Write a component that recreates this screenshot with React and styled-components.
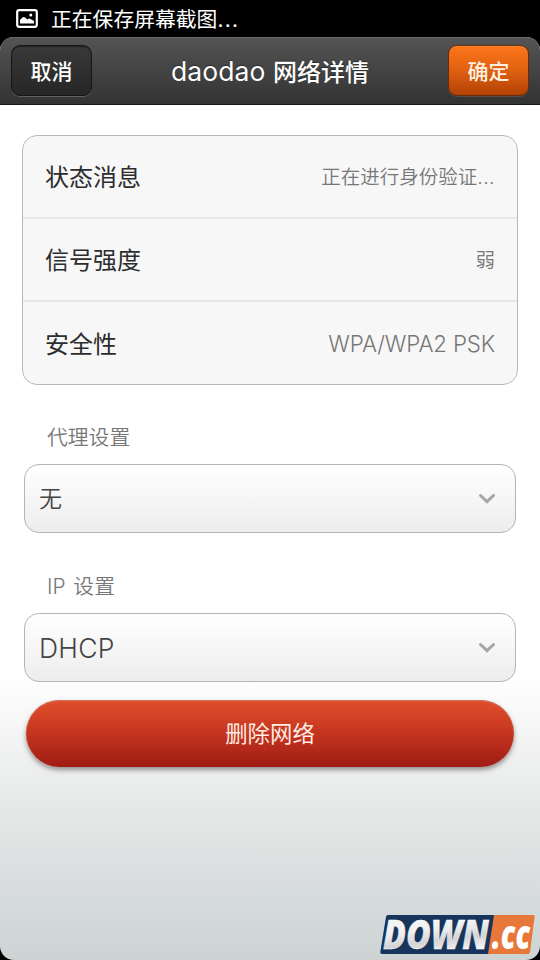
import React from 'react';
import styled, { createGlobalStyle } from 'styled-components';

const GlobalStyle = createGlobalStyle`
	* {
		box-sizing: border-box;
	}
	body {
		margin: 0;
		background: #000;
		font-family: Inter, 'Noto Sans CJK SC', sans-serif;
	}
	button {
		font-family: inherit;
		padding: 0;
	}
`;

const Phone = styled.div`
	width: 540px;
	height: 960px;
	display: flex;
	flex-direction: column;
	position: relative;
	overflow: hidden;
	background: #000;
`;

const StatusBar = styled.div`
	height: 37px;
	flex-shrink: 0;
	display: flex;
	align-items: center;
	padding-left: 16px;
	color: #fff;
	svg {
		margin-right: 13px;
	}
	span {
		font-size: 20.8px;
		line-height: 36px;
		padding-top: 2px;
		white-space: nowrap;
	}
`;

const Dots = styled.i`
	font-style: normal;
	letter-spacing: ${(props) => props.$gap}px;
`;

const Window = styled.div`
	flex: 1;
	display: flex;
	flex-direction: column;
	border-radius: 14px;
	overflow: hidden;
	background: linear-gradient(#fff 0, #fff 635px, #eceeed 740px, #dbdfdf 830px, #cdd3d3 923px);
`;

const Header = styled.header`
	height: 68px;
	flex-shrink: 0;
	display: flex;
	justify-content: space-between;
	align-items: flex-start;
	padding: 8px 11px 0 11px;
	background: linear-gradient(#545454, #333);
	border-bottom: 1px solid #181818;
	box-shadow: inset 0 1px 0 #686868;
	h1 {
		margin: 0;
		color: #fff;
		font-size: 24px;
		line-height: 52px;
		font-weight: 500;
		white-space: pre;
		text-shadow: 0 -1px 1px rgba(0, 0, 0, 0.4);
		span {
			font-weight: 400;
			font-size: 26.5px;
			letter-spacing: 0.1px;
		}
	}
`;

const HeaderButton = styled.button`
	width: 81px;
	height: 51px;
	border-radius: 9px;
	border: 1px solid ${(props) => (props.$primary ? '#6a2c08' : '#171717')};
	background: ${(props) =>
		props.$primary
			? 'linear-gradient(#fb7619, #e36312 45%, #b24205)'
			: 'linear-gradient(#393939, #262626)'};
	box-shadow: ${(props) =>
		props.$primary
			? 'inset 0 1px 0 #ff8a35, 0 1px 0 #5a4a42'
			: 'inset 0 1px 1px #222, 0 1px 0 #606060'};
	color: ${(props) => (props.$primary ? '#fff0df' : '#fff')};
	font-size: 21px;
	line-height: 51px;
	font-weight: 500;
`;

const Content = styled.main`
	display: flex;
	flex-direction: column;
	padding: 30px 24px 0;
`;

const InfoCard = styled.section`
	height: 250px;
	margin: 0 -2px 0 -2px;
	border: 1px solid #b9b9b9;
	border-radius: 15px;
	background: #f7f7f7;
	display: grid;
	grid-template-rows: 83px 83px 82px;
`;

const InfoRow = styled.div`
	display: flex;
	align-items: center;
	justify-content: space-between;
	padding: 3px 22px 0;
	border-bottom: 2px solid #e6e6e6;
	&:last-child {
		border-bottom: 0;
	}
`;

const InfoLabel = styled.span`
	font-size: 24px;
	line-height: 36px;
	color: #2d2d2d;
`;

const InfoValue = styled.span`
	font-size: ${(props) => (props.$latin ? '22.3px' : '19.5px')};
	letter-spacing: ${(props) => (props.$latin ? '-0.15px' : 'normal')};
	font-weight: ${(props) => (props.$latin ? 300 : 350)};
	line-height: 36px;
	padding-bottom: 2px;
	white-space: nowrap;
	color: #777;
`;

const FieldLabel = styled.div`
	height: 36px;
	margin: ${(props) => props.$top}px 0 9px;
	padding-left: 23px;
	font-size: 20.8px;
	line-height: 37px;
	font-weight: 350;
	word-spacing: 2px;
	color: #777;
`;

const Select = styled.button`
	height: 69px;
	display: flex;
	align-items: center;
	justify-content: space-between;
	padding: 0 19px 0 14px;
	border: 1px solid #b5b5b5;
	border-radius: 15px;
	background: linear-gradient(#fff, #ededed);
	color: #444;
	font-size: ${(props) => (props.$latin ? '26.5px' : '23px')};
	letter-spacing: ${(props) => (props.$latin ? '0.3px' : 'normal')};
	font-weight: ${(props) => (props.$latin ? 300 : 350)};
	line-height: ${(props) => (props.$latin ? 34 : 36)}px;
	text-align: left;
`;

const DeleteButton = styled.button`
	height: 67px;
	margin: 18px 2px 0;
	border: 0;
	border-radius: 34px;
	background: linear-gradient(#e14e2d, #c6361f 48%, #9f1b14);
	box-shadow: inset 0 1px 1px #c87962, 0 3px 5px rgba(60, 50, 45, 0.5);
	color: #ffece4;
	font-size: 22.4px;
	line-height: 66px;
`;

const Watermark = styled.svg`
	position: absolute;
	left: 379px;
	top: 900px;
`;

const PictureIcon = () => (
	<svg width="22" height="19" viewBox="0 0 22 19">
		<rect x="1.2" y="1.2" width="19.6" height="16.6" rx="2" fill="none" stroke="#fff" strokeWidth="2.2" />
		<path d="M4 14.5V11.5Q4 10 5.5 9.5Q7 7 9 8.5L11.5 10.5Q13 9 14.5 10L18 12V14.5Z" fill="#fff" />
		<circle cx="14.8" cy="6" r="1.5" fill="#fff" />
	</svg>
);

const Chevron = () => (
	<svg width="18" height="12" viewBox="0 0 18 12">
		<path d="M2.5 2.5 9 8.6l6.5-6.1" fill="none" stroke="#a5a5a5" strokeWidth="3" strokeLinecap="round" />
	</svg>
);

const DownLogo = () => (
	<Watermark width="161" height="60" viewBox="0 -14 161 60">
		<defs>
			<linearGradient id="silver" x1="0" y1="0" x2="0.25" y2="1">
				<stop offset="0" stopColor="#fff" />
				<stop offset="0.5" stopColor="#f0f0f0" />
				<stop offset="0.72" stopColor="#d4d4d4" />
				<stop offset="1" stopColor="#fff" />
			</linearGradient>
		</defs>
		<path d="M9 1H116L110 40H3Q1 40 1.3 38L7 3Q7.3 1 9 1Z" fill="#17345d" />
		<path d="M115 1H154Q156 1 155.6 3L151 38Q150.7 40 149 40H109Z" fill="#e8783a" />
		<g fontFamily="Open Sans" fontStyle="italic" fontWeight="800">
			<text x="4" y="35.3" fontSize="41" textLength="106" lengthAdjust="spacingAndGlyphs" fill="url(#silver)" stroke="#fff" strokeWidth="0.3">
				DOWN
			</text>
			<text x="113" y="35.3" fontSize="41" textLength="38" lengthAdjust="spacingAndGlyphs" fill="#fff">
				.cc
			</text>
		</g>
	</Watermark>
);

const info = [
	{ label: '状态消息', value: '正在进行身份验证', pending: true },
	{ label: '信号强度', value: '弱' },
	{ label: '安全性', value: 'WPA/WPA2 PSK', latin: true },
];

export default function App() {
	return (
		<Phone>
			<GlobalStyle />
			<StatusBar>
				<PictureIcon />
				<span>
					正在保存屏幕截图<Dots $gap={1.3}>...</Dots>
				</span>
			</StatusBar>
			<Window>
				<Header>
					<HeaderButton>取消</HeaderButton>
					<h1>
						<span>daodao </span>网络详情
					</h1>
					<HeaderButton $primary>确定</HeaderButton>
				</Header>
				<Content>
					<InfoCard>
						{info.map((el) => (
							<InfoRow key={el.label}>
								<InfoLabel>{el.label}</InfoLabel>
								<InfoValue $latin={el.latin}>
									{el.value}
									{el.pending ? <Dots $gap={0.4}>...</Dots> : false}
								</InfoValue>
							</InfoRow>
						))}
					</InfoCard>
					<FieldLabel $top={34}>代理设置</FieldLabel>
					<Select>
						无
						<Chevron />
					</Select>
					<FieldLabel $top={35}>IP 设置</FieldLabel>
					<Select $latin>
						DHCP
						<Chevron />
					</Select>
					<DeleteButton>删除网络</DeleteButton>
				</Content>
			</Window>
			<DownLogo />
		</Phone>
	);
}
